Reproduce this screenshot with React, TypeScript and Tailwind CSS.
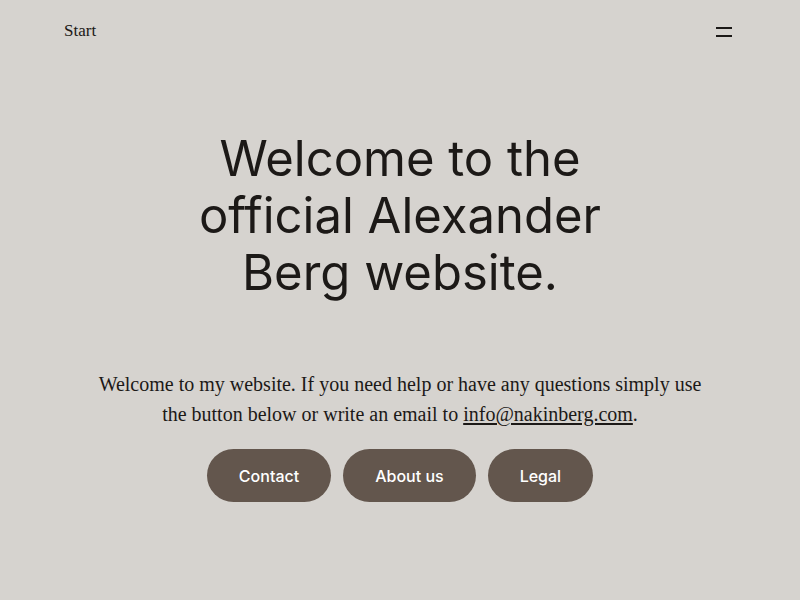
const serif = "font-['Liberation_Serif','DejaVu_Serif',serif]";
const sans = "font-['Inter','Liberation_Sans',sans-serif]";

function App() {
    return (
        <main className="flex min-h-[600px] flex-col bg-[#d6d3cf] text-[#1c1917]">
            <header className="flex h-[62px] items-center justify-between pl-16 pr-[68px]">
                <a href="#" className={`${serif} text-[17px] text-[#1c1917]`}>
                    Start
                </a>
                <button aria-label="Menu" className="mt-[2px] flex h-6 w-4 flex-col justify-center gap-[6px]">
                    <span className="block h-[2px] w-4 bg-[#1c1917]" />
                    <span className="block h-[2px] w-4 bg-[#1c1917]" />
                </button>
            </header>

            <section className="flex flex-col items-center px-8 pt-[68px]">
                <h1 className={`${sans} max-w-[430px] text-center text-[49px] leading-[57px] font-normal`}>
                    Welcome to the official Alexander Berg website.
                </h1>
                <p className={`${serif} mt-[68px] max-w-[620px] text-center text-[20px] leading-[30px]`}>
                    Welcome to my website. If you need help or have any questions simply use the button below or write
                    an email to{" "}
                    <a href="#" className="underline underline-offset-2">
                        info@nakinberg.com
                    </a>
                    .
                </p>
                <div className="mt-5 flex gap-3">
                    {["Contact", "About us", "Legal"].map((label) => (
                        <button
                            key={label}
                            className={`${sans} h-[53px] rounded-full bg-[#63564d] px-8 text-[16px] font-medium text-white`}
                        >
                            {label}
                        </button>
                    ))}
                </div>
            </section>
        </main>
    );
}

export default App;
